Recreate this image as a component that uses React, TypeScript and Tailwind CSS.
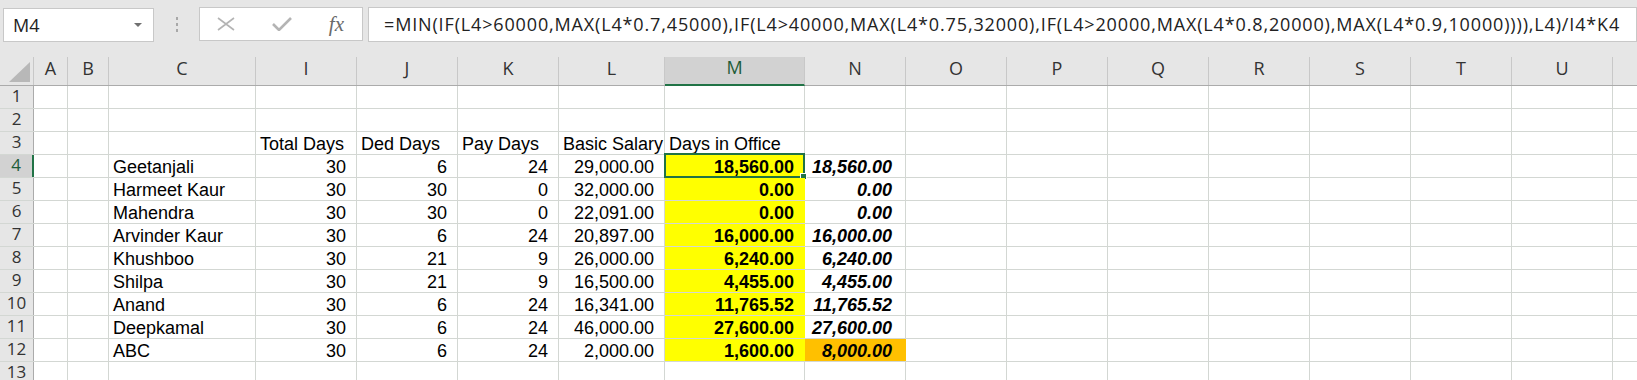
import React from "react";

type Col = { key: string; w: string };

const COLS: Col[] = [
  { key: "A", w: "w-[34px]" },
  { key: "B", w: "w-[41px]" },
  { key: "C", w: "w-[147px]" },
  { key: "I", w: "w-[101px]" },
  { key: "J", w: "w-[101px]" },
  { key: "K", w: "w-[101px]" },
  { key: "L", w: "w-[106px]" },
  { key: "M", w: "w-[140px]" },
  { key: "N", w: "w-[101px]" },
  { key: "O", w: "w-[101px]" },
  { key: "P", w: "w-[101px]" },
  { key: "Q", w: "w-[101px]" },
  { key: "R", w: "w-[101px]" },
  { key: "S", w: "w-[101px]" },
  { key: "T", w: "w-[101px]" },
  { key: "U", w: "w-[101px]" },
  { key: "V", w: "w-[101px]" },
];

const HEADINGS: Record<string, string> = {
  I: "Total Days",
  J: "Ded Days",
  K: "Pay Days",
  L: "Basic Salary",
  M: "Days in Office",
};

// name, total, ded, pay, basic, office (M), N
const PEOPLE: string[][] = [
  ["Geetanjali", "30", "6", "24", "29,000.00", "18,560.00", "18,560.00"],
  ["Harmeet Kaur", "30", "30", "0", "32,000.00", "0.00", "0.00"],
  ["Mahendra", "30", "30", "0", "22,091.00", "0.00", "0.00"],
  ["Arvinder Kaur", "30", "6", "24", "20,897.00", "16,000.00", "16,000.00"],
  ["Khushboo", "30", "21", "9", "26,000.00", "6,240.00", "6,240.00"],
  ["Shilpa", "30", "21", "9", "16,500.00", "4,455.00", "4,455.00"],
  ["Anand", "30", "6", "24", "16,341.00", "11,765.52", "11,765.52"],
  ["Deepkamal", "30", "6", "24", "46,000.00", "27,600.00", "27,600.00"],
  ["ABC", "30", "6", "24", "2,000.00", "1,600.00", "8,000.00"],
];

const FORMULA =
  "=MIN(IF(L4>60000,MAX(L4*0.7,45000),IF(L4>40000,MAX(L4*0.75,32000),IF(L4>20000,MAX(L4*0.8,20000),MAX(L4*0.9,10000)))),L4)/I4*K4";

const uiFont = "font-['Open_Sans','Noto_Sans',sans-serif]";
const cellFont = "font-['Liberation_Sans',Arial,sans-serif]";

function FormulaBar() {
  return (
    <div className="h-[57px] bg-[#e6e6e6] pt-[7px] flex items-start">
      <div className="ml-[3px] mt-[1px] w-[151px] h-[34px] bg-white border border-[#c8c8c8] flex items-center justify-between pl-[9px] pr-[11px]">
        <span className={`${uiFont} text-[18px] text-[#222]`}>M4</span>
        <span className="w-0 h-0 border-l-[4px] border-r-[4px] border-t-[4px] border-l-transparent border-r-transparent border-t-[#707070]" />
      </div>
      <div className="w-[45px] h-[34px] flex flex-col items-center justify-center gap-[3px]">
        <span className="w-[2px] h-[3px] bg-[#a8a8a8]" />
        <span className="w-[2px] h-[3px] bg-[#a8a8a8]" />
        <span className="w-[2px] h-[3px] bg-[#a8a8a8]" />
      </div>
      <div className="w-[164px] h-[34px] bg-white border border-[#c8c8c8] flex items-center pl-[17px] pr-[18px] justify-between">
        <svg width="18" height="14" viewBox="0 0 18 14">
          <path d="M1 1 L17 13 M17 1 L1 13" stroke="#b4b4b4" strokeWidth="1.6" fill="none" />
        </svg>
        <svg width="20" height="14" viewBox="0 0 20 14">
          <path d="M1 7 L7 13 L19 1" stroke="#b4b4b4" strokeWidth="2.6" fill="none" />
        </svg>
        <span className="font-['Liberation_Serif',serif] italic text-[21px] text-[#6a6a6a] leading-none">fx</span>
      </div>
      <div className="ml-[5px] flex-1 h-[35px] bg-white border border-[#c8c8c8] flex items-center pl-[15px] overflow-hidden whitespace-nowrap">
        <span className={`${uiFont} text-[18px] text-[#222] tracking-[0.85px]`}>{FORMULA}</span>
      </div>
    </div>
  );
}

function HeaderRow() {
  return (
    <div className="flex h-[29px] bg-[#e6e6e6] border-b border-[#ababab]">
      <div className="w-[34px] shrink-0 border-r border-[#c8c8c8] relative">
        <svg className="absolute right-[3px] bottom-[3px]" width="21" height="20" viewBox="0 0 21 20">
          <path d="M21 0 L21 20 L0 20 Z" fill="#b8b8b8" />
        </svg>
      </div>
      {COLS.map((c) => (
        <div
          key={c.key}
          className={`${c.w} shrink-0 border-r border-[#c8c8c8] flex items-end justify-center pb-[3px] ${uiFont} text-[18px] ${
            c.key === "M" ? "bg-[#d2d2d2] text-[#1e5c38] border-b-2 border-b-[#217346] -mb-[1px]" : "text-[#333]"
          }`}
        >
          {c.key}
        </div>
      ))}
    </div>
  );
}

function cellText(rowIdx: number, col: string): string {
  if (rowIdx === 3) return HEADINGS[col] ?? "";
  const p = PEOPLE[rowIdx - 4];
  if (!p) return "";
  const map: Record<string, number> = { C: 0, I: 1, J: 2, K: 3, L: 4, M: 5, N: 6 };
  const i = map[col];
  return i === undefined ? "" : p[i];
}

function Cell({ row, col }: { row: number; col: Col }) {
  const text = cellText(row, col.key);
  const isData = row >= 4 && row <= 12;
  const numeric = isData && col.key !== "C";
  const yellow = isData && col.key === "M";
  const orange = row === 12 && col.key === "N";

  let cls = `${col.w} shrink-0 h-full border-r border-[#d3d7d3] relative whitespace-nowrap ${cellFont} text-[18px] leading-[22px] pt-[1px] text-black`;
  if (yellow) cls += " bg-[#ffff00] border-r-[#ffff00] font-bold";
  if (orange) cls += " bg-[#ffc000] border-r-[#ffc000]";
  if (isData && col.key === "N") cls += " font-bold italic";
  cls += numeric ? (col.key === "N" ? " text-right pr-[13px]" : " text-right pr-[10px]") : " pl-[4px]";

  return (
    <div className={cls}>
      {text}
      {row === 4 && col.key === "M" && (
        <div className="absolute -top-[2px] -left-[1px] -right-[1px] -bottom-[1px] border-2 border-[#217346] pointer-events-none">
          <div className="absolute -right-[4px] -bottom-[4px] w-[7px] h-[7px] bg-[#217346] border border-white" />
        </div>
      )}
    </div>
  );
}

function Row({ n }: { n: number }) {
  const sel = n === 4;
  return (
    <div className="flex h-[23px] border-b border-[#d3d7d3]">
      <div
        className={`w-[34px] shrink-0 flex items-end justify-center pb-[1px] ${uiFont} text-[17px] leading-[22px] ${
          sel ? "bg-[#d2d2d2] text-[#1e5c38] border-r-2 border-[#217346]" : "bg-[#e6e6e6] text-[#333] border-r border-[#ababab]"
        }`}
      >
        {n}
      </div>
      {COLS.map((c) => (
        <Cell key={c.key} row={n} col={c} />
      ))}
    </div>
  );
}

export default function App() {
  const rows = Array.from({ length: 13 }, (_, i) => i + 1);
  return (
    <div className="w-[1637px] h-[380px] overflow-hidden bg-white">
      <FormulaBar />
      <HeaderRow />
      {rows.map((n) => (
        <Row key={n} n={n} />
      ))}
    </div>
  );
}
